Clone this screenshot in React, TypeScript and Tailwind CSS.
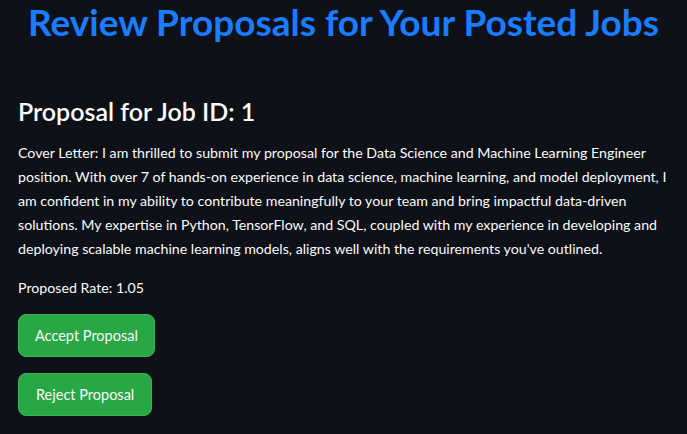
const coverLines = [
  'Cover Letter: I am thrilled to submit my proposal for the Data Science and Machine Learning Engineer',
  'position. With over 7 of hands-on experience in data science, machine learning, and model deployment, I',
  'am confident in my ability to contribute meaningfully to your team and bring impactful data-driven',
  'solutions. My expertise in Python, TensorFlow, and SQL, coupled with my experience in developing and',
  "deploying scalable machine learning models, aligns well with the requirements you've outlined.",
];

export default function App() {
  return (
    <div
      className="w-[687px] h-[434px] overflow-hidden bg-[#0e1117] text-[#fafafa]"
      style={{ fontFamily: 'Lato, "Noto Sans", sans-serif' }}
    >
      <div className="px-[18px]">
        <h1 className="text-center text-[37px] leading-[44px] font-bold text-[#1a7cff] whitespace-nowrap">
          Review Proposals for Your Posted Jobs
        </h1>

        <h2 className="mt-[51px] text-[25px] leading-[32px] font-semibold">Proposal for Job ID: 1</h2>

        <p className="mt-[14px] text-[14.2px] leading-[24px]">
          {coverLines.map((l) => (
            <span key={l} className="block whitespace-nowrap">
              {l}
            </span>
          ))}
        </p>

        <p className="mt-[15px] text-[14.2px] leading-[24px]">Proposed Rate: 1.05</p>

        <div className="mt-[14px] flex flex-col items-start gap-[16px]">
          <button className="h-[43px] px-[16px] rounded-[8px] bg-[#28a745] border border-[#3cb35a] text-[14.5px]">
            Accept Proposal
          </button>
          <button className="h-[43px] px-[17px] rounded-[8px] bg-[#28a745] border border-[#3cb35a] text-[14.5px]">
            Reject Proposal
          </button>
        </div>
      </div>
    </div>
  );
}
